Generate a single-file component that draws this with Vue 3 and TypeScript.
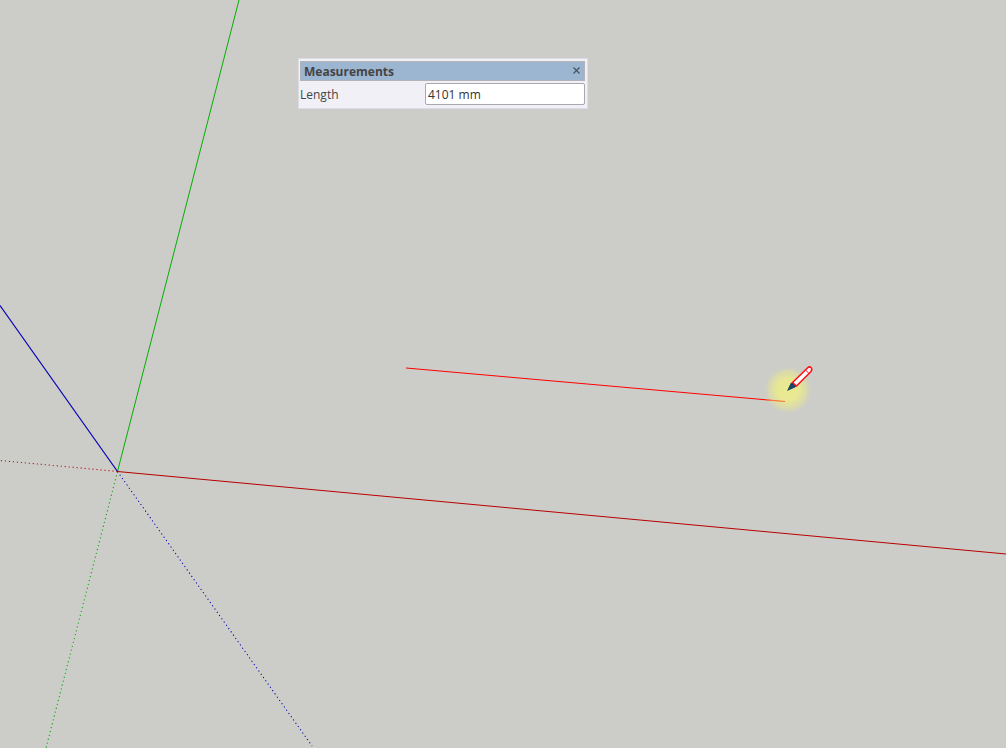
<script setup lang="ts">
import { ref } from 'vue'

const length = ref('4101 mm')
const open = ref(true)
</script>

<template>
  <main class="viewport">
    <svg class="scene" width="1006" height="748" viewBox="0 0 1006 748" aria-label="Model axes and line being drawn">
      <defs>
        <radialGradient id="halo">
          <stop offset="0" stop-color="#ebea90" />
          <stop offset="0.45" stop-color="#e9e892" stop-opacity="0.95" />
          <stop offset="0.75" stop-color="#e2e19c" stop-opacity="0.6" />
          <stop offset="1" stop-color="#cccdc8" stop-opacity="0" />
        </radialGradient>
      </defs>
      <g fill="none" stroke-width="1">
        <path d="M117.5 471.5 L239 0" stroke="#00b000" />
        <path d="M117.5 471.5 L0 305.5" stroke="#0000b4" stroke-width="1.2" />
        <path d="M117.5 471.5 L1006 554" stroke="#b80000" />
        <path class="dotted" d="M117.5 471.5 L0 460.5" stroke="#c00000" />
        <path class="dotted" d="M117.5 471.5 L46 748" stroke="#00a800" />
        <path class="dotted" d="M117.5 471.5 L312 746" stroke="#0000b8" />
        <path d="M406 368 L785 401.5" stroke="#ff0000" />
      </g>
      <circle cx="788" cy="390" r="25" fill="url(#halo)" />
      <path d="M766 399.8 L785 401.5" stroke="#ff7030" stroke-width="1" />
      <g>
        <path d="M787 391 L790.5 383.5 L792.5 382 L796.5 386 L795 387.5 Z" fill="#174866" />
        <path d="M792.5 382.5 L807.5 368 Q809.5 366 811 367.5 Q812.5 369 811 371.5 L796.5 386 Z" fill="#fff" stroke="#ff0c14" stroke-width="1.5" stroke-linejoin="round" />
        <path d="M805.5 370 L809 373.5" fill="none" stroke="#ff0c14" stroke-width="1" />
      </g>
    </svg>

    <section v-if="open" class="panel" aria-labelledby="panel-title">
      <header class="bar">
        <h2 id="panel-title">Measurements</h2>
        <button type="button" class="close" aria-label="Close" @click="open = false">
          <svg width="7" height="7" viewBox="0 0 7 7">
            <path d="M0.5 0.5 L6.5 6.5 M6.5 0.5 L0.5 6.5" stroke="#46505a" stroke-width="1.1" />
          </svg>
        </button>
      </header>
      <div class="row">
        <label for="length">Length</label>
        <input id="length" v-model="length" type="text" />
      </div>
    </section>
  </main>
</template>

<style>
body {
  margin: 0;
  background: #cccdc8;
}
</style>

<style scoped>
.viewport {
  position: relative;
  min-height: 100vh;
  overflow: hidden;
  background: #cccdc8;
  font-family: "Open Sans", "Noto Sans", sans-serif;
  font-size: 12px;
  color: #444;
}

.scene {
  position: absolute;
  top: 0;
  left: 0;
}

.dotted {
  stroke-dasharray: 1.1 2.9;
  stroke-width: 1.1;
}

.panel {
  position: absolute;
  top: 58px;
  left: 298px;
  box-sizing: border-box;
  width: 290px;
  padding: 2px 2px 3px 1px;
  border: 1px solid #dcdce6;
  background: #f0f0f6;
}

.bar {
  display: flex;
  align-items: flex-start;
  justify-content: space-between;
  box-sizing: border-box;
  height: 20px;
  padding: 0 4px 0 3px;
  border: 1px solid #b4b4b8;
  background: #9cb5d1;
}

h2 {
  margin: 0;
  font-size: 12px;
  font-weight: 700;
  line-height: 20px;
}

.close {
  display: flex;
  padding: 5px 0;
  border: 0;
  background: none;
}

.row {
  display: grid;
  grid-template-columns: 125px 1fr;
  align-items: center;
  margin-top: 2px;
}

input {
  box-sizing: border-box;
  width: 100%;
  min-width: 0;
  height: 22px;
  padding: 0 2px;
  border: 1px solid #a8a8b0;
  border-radius: 2px;
  background: #fff;
  color: #333;
  font: inherit;
}
</style>
